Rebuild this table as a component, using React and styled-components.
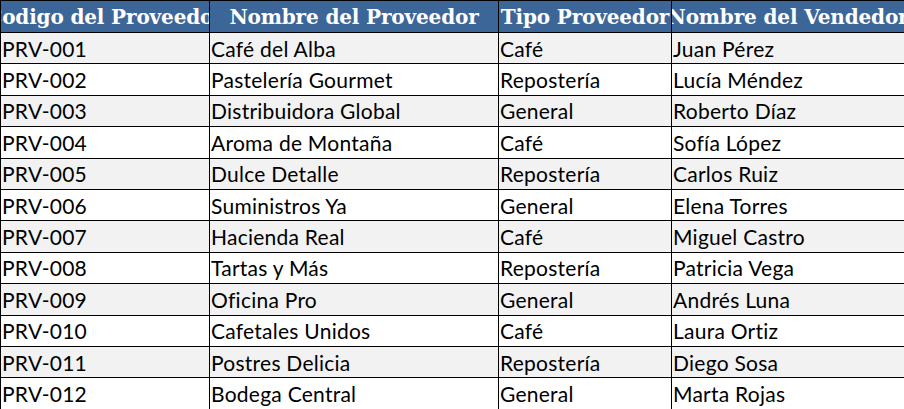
import React from "react";
import styled, { createGlobalStyle } from "styled-components";

const GlobalStyle = createGlobalStyle`
	html, body {
		margin: 0;
		padding: 0;
		background: #ffffff;
	}
`;

const Sheet = styled.table`
	width: 904px;
	border-collapse: collapse;
	table-layout: fixed;
	font-family: "Lato", "Liberation Sans", sans-serif;
	color: #000000;
`;

const HeadCell = styled.th`
	height: 31px;
	padding: 0;
	background: #3c6598;
	border: 1px solid #000000;
`;

const HeadText = styled.div`
	display: flex;
	justify-content: center;
	overflow: hidden;
	white-space: nowrap;
	color: #ffffff;
	font-family: "DejaVu Serif", "Liberation Serif", serif;
	font-weight: bold;
	font-size: 20px;
	letter-spacing: -0.15px;
`;

const Row = styled.tr`
	background: ${props => (props.shaded ? "#f2f2f2" : "#ffffff")};
`;

const Cell = styled.td`
	height: 30.4px;
	padding: 0 0 0 1px;
	font-size: 21px;
	letter-spacing: 0.25px;
	line-height: 1;
	white-space: nowrap;
	overflow: hidden;
	border: 1px solid #000000;
`;

const columns = [
	{ title: "Codigo del Proveedor", width: 209 },
	{ title: "Nombre del Proveedor", width: 289 },
	{ title: "Tipo Proveedor", width: 173 },
	{ title: "Nombre del Vendedor", width: 233 }
];

const providers = [
	["PRV-001", "Café del Alba", "Café", "Juan Pérez"],
	["PRV-002", "Pastelería Gourmet", "Repostería", "Lucía Méndez"],
	["PRV-003", "Distribuidora Global", "General", "Roberto Díaz"],
	["PRV-004", "Aroma de Montaña", "Café", "Sofía López"],
	["PRV-005", "Dulce Detalle", "Repostería", "Carlos Ruiz"],
	["PRV-006", "Suministros Ya", "General", "Elena Torres"],
	["PRV-007", "Hacienda Real", "Café", "Miguel Castro"],
	["PRV-008", "Tartas y Más", "Repostería", "Patricia Vega"],
	["PRV-009", "Oficina Pro", "General", "Andrés Luna"],
	["PRV-010", "Cafetales Unidos", "Café", "Laura Ortiz"],
	["PRV-011", "Postres Delicia", "Repostería", "Diego Sosa"],
	["PRV-012", "Bodega Central", "General", "Marta Rojas"]
];

export default function App() {
	return (
		<>
			<GlobalStyle />
			<Sheet>
				<colgroup>
					{columns.map(col => (
						<col key={col.title} style={{ width: col.width }} />
					))}
				</colgroup>
				<thead>
					<tr>
						{columns.map(col => (
							<HeadCell key={col.title}>
								<HeadText>{col.title}</HeadText>
							</HeadCell>
						))}
					</tr>
				</thead>
				<tbody>
					{providers.map((row, i) => (
						<Row key={row[0]} shaded={i % 2 === 0}>
							{row.map((value, j) => (
								<Cell key={j}>{value}</Cell>
							))}
						</Row>
					))}
				</tbody>
			</Sheet>
		</>
	);
}
